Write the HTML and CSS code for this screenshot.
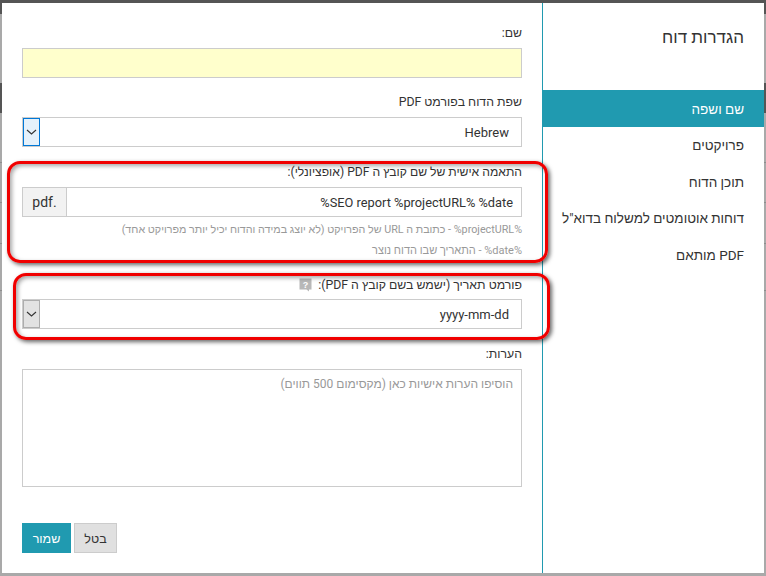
FILE: index.html
```html
<!DOCTYPE html>
<html lang="he" dir="rtl">
<head>
<meta charset="utf-8">
<title>הגדרות דוח</title>
<link rel="stylesheet" href="styles.css">
</head>
<body>
<div class="modal">
  <aside class="side">
    <h1 class="side-title">הגדרות דוח</h1>
    <nav class="menu">
      <a class="menu-item active">שם ושפה</a>
      <a class="menu-item">פרויקטים</a>
      <a class="menu-item">תוכן הדוח</a>
      <a class="menu-item">דוחות אוטומטים למשלוח בדוא"ל</a>
      <a class="menu-item">PDF מותאם</a>
    </nav>
  </aside>
  <form class="form">
    <div class="field f-name">
      <label class="lbl">שם:</label>
      <div class="box yellow"></div>
    </div>
    <div class="field f-lang">
      <label class="lbl">שפת הדוח בפורמט PDF</label>
      <div class="box select">
        <span class="val">Hebrew</span>
        <span class="arrow focus"><svg width="11" height="6" viewBox="0 0 11 6"><path d="M1 1l4.5 4L10 1" fill="none" stroke="#333" stroke-width="1.1"/></svg></span>
      </div>
    </div>
    <div class="field f-pdf">
      <label class="lbl">התאמה אישית של שם קובץ ה PDF (אופציונלי):</label>
      <div class="box group">
        <span class="val long" dir="ltr">%SEO report %projectURL% %date</span>
        <span class="addon">.pdf</span>
      </div>
      <p class="hint h1">%projectURL% - כתובת ה URL של הפרויקט (לא יוצג במידה והדוח יכיל יותר מפרויקט אחד)</p>
      <p class="hint h2">%date% - התאריך שבו הדוח נוצר</p>
    </div>
    <div class="field f-date">
      <label class="lbl">פורמט תאריך (ישמש בשם קובץ ה PDF):<svg class="help" width="13" height="14" viewBox="0 0 13 14"><path d="M0.5 0.5h12v11h-2.5v2l-2.500-2h-7z" fill="#b8b8b8"/><text x="6.500" y="9.500" text-anchor="middle" class="help-mark">?</text></svg></label>
      <div class="box select">
        <span class="val">yyyy-mm-dd</span>
        <span class="arrow"><svg width="11" height="6" viewBox="0 0 11 6"><path d="M1 1l4.5 4L10 1" fill="none" stroke="#333" stroke-width="1.1"/></svg></span>
      </div>
    </div>
    <div class="field f-notes">
      <label class="lbl">הערות:</label>
      <div class="box notes">הוסיפו הערות אישיות כאן (מקסימום 500 תווים)</div>
    </div>
    <div class="actions">
      <button type="button" class="btn cancel">בטל</button>
      <button type="button" class="btn save">שמור</button>
    </div>
  </form>
  <div class="mark m1"></div>
  <div class="mark m2"></div>
</div>
</body>
</html>
```
FILE: styles.css
```css
* { box-sizing: border-box; }
html, body { margin: 0; height: 100%; }
body {
  width: 766px;
  height: 576px;
  overflow: hidden;
  background: linear-gradient(to bottom,
    #555 0, #555 14px,
    #a9a9a9 14px, #a9a9a9 83px,
    #555 83px, #555 113px,
    #a9a9a9 113px, #a9a9a9 162px,
    #8e8e8e 162px, #8e8e8e 163px,
    #a9a9a9 163px, #a9a9a9 202px,
    #8e8e8e 202px, #8e8e8e 203px,
    #a9a9a9 203px, #a9a9a9 243px,
    #8e8e8e 243px, #8e8e8e 244px,
    #a9a9a9 244px, #a9a9a9 290px,
    #8e8e8e 290px, #8e8e8e 291px,
    #a9a9a9 291px, #a9a9a9 576px);
  padding: 3px 2px;
  font-family: Roboto, "Liberation Sans", sans-serif;
  color: #333;
}
.modal {
  position: relative;
  display: flex;
  width: 762px;
  height: 570px;
  background: #fff;
}
.side {
  width: 222px;
  flex: none;
  border-left: 1px solid #209ab0;
}
.side-title {
  margin: 0;
  padding: 25px 20px 0 0;
  height: 87px;
  font-size: 17px;
  line-height: 19px;
  font-weight: 500;
  color: #333;
}
.menu { display: flex; flex-direction: column; }
.menu-item {
  height: 36.5px;
  line-height: 38px;
  padding-right: 20px;
  font-size: 13.5px;
  color: #333;
  white-space: nowrap;
}
.menu-item:nth-child(even) { line-height: 37px; }
.menu-item.active { background: #209ab0; color: #fff; }
.form {
  flex: 1;
  padding: 0 20px;
  display: flex;
  flex-direction: column;
}
.field { display: flex; flex-direction: column; }
.lbl {
  font-size: 12.3px;
  line-height: 16px;
  height: 16px;
  color: #333;
  display: flex;
  align-items: center;
}
.box {
  border: 1px solid #ccc;
  height: 30px;
  font-size: 13px;
  display: flex;
  align-items: center;
  margin-top: 7px;
}
.yellow { background: #ffffcc; }
.f-name { padding-top: 22px; }
.f-lang { padding-top: 16px; }
.f-pdf { padding-top: 17px; }
.f-pdf .lbl { font-size: 12.15px; }
.f-date { padding-top: 19px; }
.f-date .box { margin-top: 6px; }
.f-notes { padding-top: 17px; }
.select { justify-content: space-between; }
.val { padding-right: 12px; white-space: nowrap; }
.long { padding-right: 8px; font-size: 12.8px; }
.arrow {
  width: 17px;
  height: 28px;
  display: flex;
  align-items: center;
  justify-content: center;
  background: #e2e2e2;
  border: 1px solid #adadad;
}
.arrow.focus { background: #e5f1fb; border-color: #0078d7; }
.group { justify-content: space-between; }
.addon {
  width: 44px;
  height: 28px;
  background: #f2f2f2;
  border-right: 1px solid #ccc;
  line-height: 28px;
  text-align: center;
  font-size: 14px;
}
.hint {
  margin: 0;
  line-height: 14px;
  color: #999;
}
.h1 { margin-top: 6px; font-size: 10.75px; }
.h2 { margin-top: 7px; font-size: 11px; }
.help { margin-right: 6px; flex: none; }
.help-mark {
  fill: #fff;
  font-size: 9px;
  font-weight: 700;
  font-family: "Liberation Sans", sans-serif;
}
.notes {
  height: 118px;
  align-items: flex-start;
  padding: 7px 8px;
  font-size: 12px;
  color: #999;
}
.actions {
  display: flex;
  justify-content: flex-end;
  gap: 3px;
  margin-top: 36px;
}
.btn {
  height: 30px;
  font-family: inherit;
  font-size: 12.5px;
  padding: 0;
  border: 1px solid #209ab0;
}
.save { width: 49px; background: #209ab0; color: #fff; }
.cancel { width: 43px; background: #e0e0e0; border-color: #ccc; color: #333; }
.mark {
  position: absolute;
  border: 3px solid #f00000;
  border-radius: 13px;
  box-shadow: 2px 2px 4px rgba(0,0,0,.6), inset 2px 2px 4px rgba(0,0,0,.35);
  pointer-events: none;
}
.m1 { left: 5px; top: 158px; width: 541px; height: 102px; }
.m2 { left: 11px; top: 270px; width: 537px; height: 67px; }
```
